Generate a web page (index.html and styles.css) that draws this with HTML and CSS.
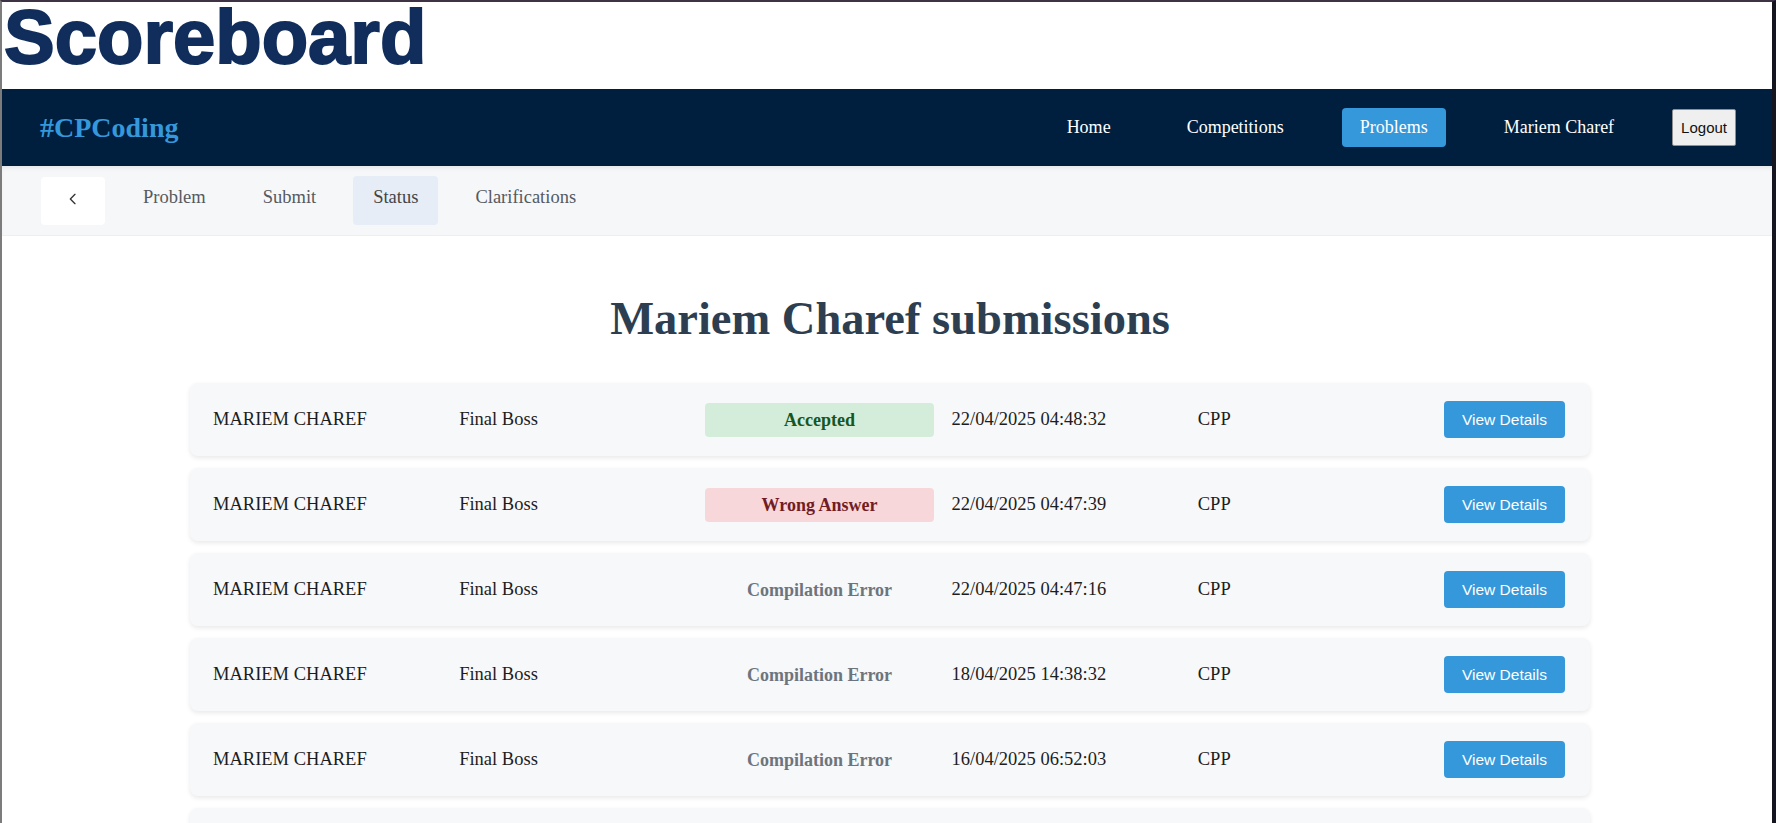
FILE: index.html
```html
<!DOCTYPE html>
<html lang="en">
<head>
<meta charset="utf-8">
<title>Scoreboard</title>
<link rel="stylesheet" href="styles.css">
</head>
<body>
<div class="frame">
  <h1 class="page-title">Scoreboard</h1>

  <nav class="navbar">
    <div class="brand">#CPCoding</div>
    <div class="nav-links">
      <a class="nav-link">Home</a>
      <a class="nav-link">Competitions</a>
      <a class="nav-link active">Problems</a>
      <a class="nav-link">Mariem Charef</a>
      <button class="logout">Logout</button>
    </div>
  </nav>

  <div class="subnav">
    <button class="back-btn" aria-label="Back">
      <svg width="16" height="16" viewBox="0 0 24 24" fill="none" stroke="#333" stroke-width="2" stroke-linecap="round" stroke-linejoin="round"><polyline points="15 19 8 12 15 5"/></svg>
    </button>
    <a class="tab">Problem</a>
    <a class="tab">Submit</a>
    <a class="tab active">Status</a>
    <a class="tab">Clarifications</a>
  </div>

  <main class="content">
    <h2 class="heading">Mariem Charef submissions</h2>
    <div class="list">
      <div class="row">
        <span class="cell">MARIEM CHAREF</span>
        <span class="cell">Final Boss</span>
        <span class="badge accepted">Accepted</span>
        <span class="cell">22/04/2025 04:48:32</span>
        <span class="cell">CPP</span>
        <button class="details">View Details</button>
      </div>
      <div class="row">
        <span class="cell">MARIEM CHAREF</span>
        <span class="cell">Final Boss</span>
        <span class="badge wrong">Wrong Answer</span>
        <span class="cell">22/04/2025 04:47:39</span>
        <span class="cell">CPP</span>
        <button class="details">View Details</button>
      </div>
      <div class="row">
        <span class="cell">MARIEM CHAREF</span>
        <span class="cell">Final Boss</span>
        <span class="badge ce">Compilation Error</span>
        <span class="cell">22/04/2025 04:47:16</span>
        <span class="cell">CPP</span>
        <button class="details">View Details</button>
      </div>
      <div class="row">
        <span class="cell">MARIEM CHAREF</span>
        <span class="cell">Final Boss</span>
        <span class="badge ce">Compilation Error</span>
        <span class="cell">18/04/2025 14:38:32</span>
        <span class="cell">CPP</span>
        <button class="details">View Details</button>
      </div>
      <div class="row">
        <span class="cell">MARIEM CHAREF</span>
        <span class="cell">Final Boss</span>
        <span class="badge ce">Compilation Error</span>
        <span class="cell">16/04/2025 06:52:03</span>
        <span class="cell">CPP</span>
        <button class="details">View Details</button>
      </div>
      <div class="row">
        <span class="cell">MARIEM CHAREF</span>
        <span class="cell">Final Boss</span>
        <span class="badge ce">Compilation Error</span>
        <span class="cell">16/04/2025 06:50:41</span>
        <span class="cell">CPP</span>
        <button class="details">View Details</button>
      </div>
    </div>
  </main>
</div>
</body>
</html>
```

FILE: styles.css
```css
html, body {
  margin: 0;
  padding: 0;
  background: #ffffff;
}

body {
  font-family: "Liberation Serif", "Times New Roman", serif;
  overflow: hidden;
}

.frame {
  border-top: 2px solid #3d3344;
  border-left: 2px solid #7c7c7c;
  border-right: 4px solid #15151f;
  min-height: 100vh;
  box-sizing: border-box;
  background: #ffffff;
}

.page-title {
  margin: 0;
  padding: 0 0 17px 2px;
  font-family: "Liberation Sans", Arial, sans-serif;
  font-weight: 700;
  font-size: 76px;
  line-height: 70px;
  color: #102d5b;
  -webkit-text-stroke: 2px #102d5b;
  letter-spacing: 0;
}

.navbar {
  height: 77px;
  background: #001f3f;
  display: flex;
  align-items: center;
  justify-content: space-between;
  padding: 0 36px 0 38px;
  box-sizing: border-box;
}

.brand {
  font-weight: 700;
  font-size: 28px;
  color: #3498db;
}

.nav-links {
  display: flex;
  align-items: center;
  gap: 40px;
}

.nav-link {
  color: #ffffff;
  font-size: 18px;
  padding: 0 18px;
  height: 39px;
  line-height: 39px;
  border-radius: 4px;
  cursor: pointer;
}

.nav-link.active {
  background: #3498db;
}

.logout {
  font-family: "Liberation Sans", Arial, sans-serif;
  font-size: 15px;
  height: 37px;
  padding: 0 8px;
  background: #efefef;
  color: #111;
  border: 1px solid #8f8f8f;
  border-radius: 2px;
}

.subnav {
  height: 70px;
  background: #f6f7f9;
  border-bottom: 1px solid #eceef1;
  box-shadow: inset 0 4px 6px -4px rgba(0, 0, 0, 0.12);
  display: flex;
  align-items: center;
  gap: 17px;
  padding: 0 38px 0 39px;
  box-sizing: border-box;
}

.back-btn {
  width: 64px;
  height: 48px;
  background: #ffffff;
  border: none;
  border-radius: 4px;
  display: flex;
  align-items: center;
  justify-content: center;
  margin-right: 1px;
  padding: 0 0 4px 0;
}

.tab {
  font-size: 18.5px;
  color: #555a60;
  height: 49px;
  line-height: 42px;
  padding: 0 20px;
  border-radius: 4px;
  box-sizing: border-box;
}

.tab.active {
  background: #e6edf7;
  color: #444;
}

.content {
  padding: 56px 0 0 6px;
}

.heading {
  margin: 0 0 37px;
  text-align: center;
  font-size: 46.5px;
  line-height: 54px;
  font-weight: 700;
  color: #2c3e50;
}

.list {
  width: 1400px;
  margin: 0 auto;
  display: flex;
  flex-direction: column;
  gap: 12px;
}

.row {
  height: 73px;
  background: #f7f8fa;
  border-radius: 8px;
  box-shadow: 0 2px 5px rgba(0, 0, 0, 0.09);
  display: grid;
  grid-template-columns: repeat(5, 1fr) auto;
  column-gap: 18px;
  align-items: center;
  padding: 0 25px 0 23px;
}

.cell {
  font-size: 18.5px;
  color: #1d1d1d;
}

.badge {
  height: 34px;
  line-height: 34px;
  text-align: center;
  border-radius: 4px;
  font-size: 18px;
  font-weight: 700;
}

.badge.accepted {
  background: #d4edda;
  color: #155724;
}

.badge.wrong {
  background: #f8d7da;
  color: #721c24;
}

.badge.ce {
  color: #6c757d;
}

.details {
  font-family: "Liberation Sans", Arial, sans-serif;
  font-size: 15.5px;
  color: #ffffff;
  background: #3498db;
  border: none;
  border-radius: 4px;
  height: 37px;
  padding: 0 18px;
}
```
